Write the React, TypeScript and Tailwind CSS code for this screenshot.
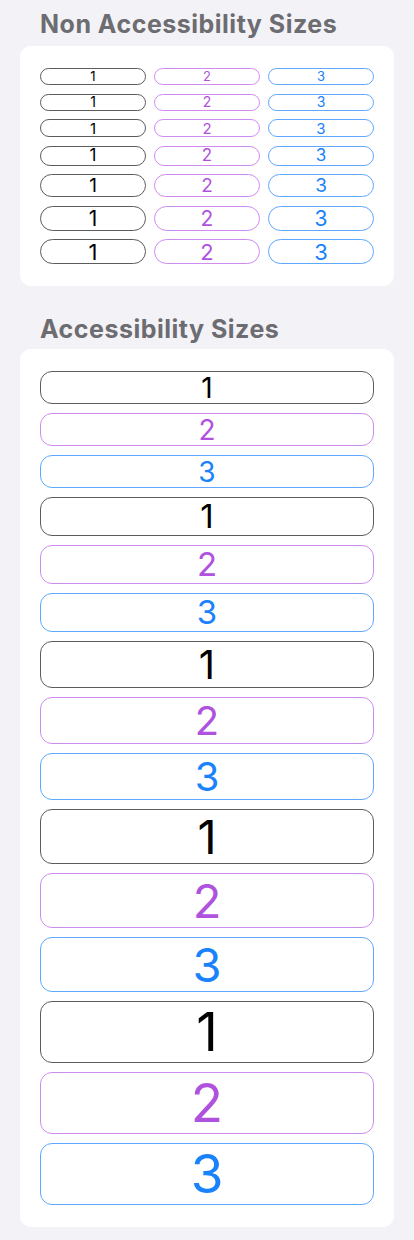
import React from "react";

const smallRows = [
  { h: "h-[17px]", text: "text-[13px]" },
  { h: "h-[17px]", text: "text-[14px]" },
  { h: "h-[18px]", text: "text-[15px]" },
  { h: "h-[20px]", text: "text-[17px]" },
  { h: "h-[23px]", text: "text-[19px]" },
  { h: "h-[25px]", text: "text-[21px]" },
  { h: "h-[25px]", text: "text-[22px]" },
];

const bigRows = [
  { h: "h-[33px]", text: "text-[28px]" },
  { h: "h-[39px]", text: "text-[33px]" },
  { h: "h-[47px]", text: "text-[40px]" },
  { h: "h-[55px]", text: "text-[47px]" },
  { h: "h-[62px]", text: "text-[53px]" },
];

const styles = [
  { label: "1", cls: "border-[#5c5c5c] text-black" },
  { label: "2", cls: "border-[#cf8cf0] text-[#af52de]" },
  { label: "3", cls: "border-[#5ea8ff] text-[#1a82fb]" },
];

function Pill({ label, cls, h, text, round }: { label: string; cls: string; h: string; text: string; round: string }) {
  return (
    <div className={`flex items-center justify-center border ${round} ${h} ${text} ${cls} leading-none`}>
      {label}
    </div>
  );
}

export default function App() {
  return (
    <main className="min-h-screen bg-[#f2f2f7] px-5 pt-[9px] pb-3" style={{ fontFamily: "Inter, 'Liberation Sans', sans-serif" }}>
      <h2 className="pl-5 text-[25px] font-bold leading-[30px] tracking-[0.5px] text-[#6c6c71]">Non Accessibility Sizes</h2>
      <div className="mt-[7px] rounded-[11px] bg-white px-5 py-[22px]">
        <div className="flex flex-col gap-[8.5px]">
          {smallRows.map((r, i) => (
            <div key={i} className="grid grid-cols-3 gap-2">
              {styles.map((s) => (
                <Pill key={s.label} label={s.label} cls={s.cls} h={r.h} text={r.text} round="rounded-full" />
              ))}
            </div>
          ))}
        </div>
      </div>

      <h2 className="mt-[28px] pl-5 text-[25px] font-bold leading-[30px] tracking-[0.5px] text-[#6c6c71]">Accessibility Sizes</h2>
      <div className="mt-[5px] rounded-[11px] bg-white px-5 py-[22px]">
        <div className="flex flex-col gap-[9px]">
          {bigRows.map((r, i) =>
            styles.map((s) => (
              <Pill key={`${i}-${s.label}`} label={s.label} cls={s.cls} h={r.h} text={r.text} round="rounded-[12px]" />
            ))
          )}
        </div>
      </div>
    </main>
  );
}
